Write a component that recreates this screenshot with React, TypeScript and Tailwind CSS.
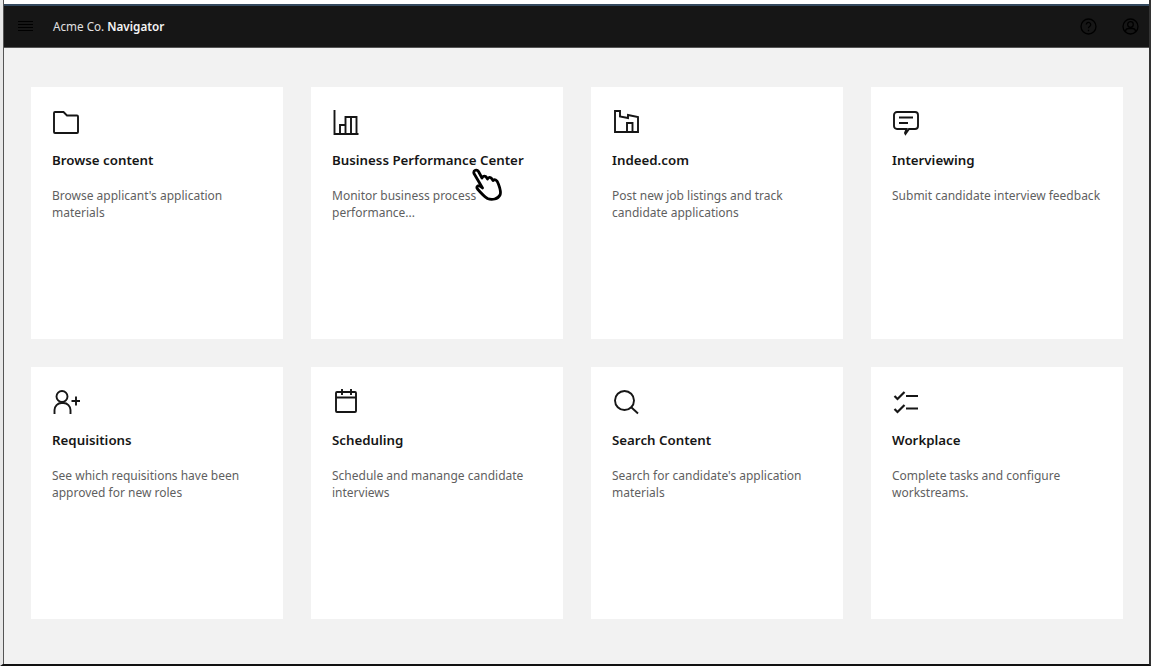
import type { ReactNode } from 'react';

const font = "[font-family:'Noto_Sans',sans-serif]";

const svgProps = {
  width: 28,
  height: 28,
  viewBox: '0 0 28 28',
  fill: 'none',
  stroke: '#161616',
  strokeWidth: 1.9,
};

const icons: Record<string, ReactNode> = {
  folder: (
    <svg {...svgProps}>
      <path d="M2 4a1 1 0 0 1 1-1h8.500l3.500 3.500h10a1 1 0 0 1 1 1V23a1 1 0 0 1-1 1H3a1 1 0 0 1-1-1z" />
    </svg>
  ),
  chart: (
    <svg {...svgProps}>
      <path d="M2.500 1v24h24" />
      <path d="M8 25v-9h5.500v9M13.500 16V8h5.500v17M19 8h5.500v17" />
    </svg>
  ),
  factory: (
    <svg {...svgProps}>
      <path d="M3 23V2h5v5.500l8 1.500V6l10 2v15z" />
      <path d="M15 23v-9h5.500v9" />
    </svg>
  ),
  chat: (
    <svg {...svgProps}>
      <path d="M5 3h18a3 3 0 0 1 3 3v11a3 3 0 0 1-3 3h-6l-3.500 5-.5-1 1.500-4H5a3 3 0 0 1-3-3V6a3 3 0 0 1 3-3z" />
      <path d="M7 8.500h14M7 14h9" />
    </svg>
  ),
  userPlus: (
    <svg {...svgProps}>
      <circle cx="10" cy="7.500" r="5.500" />
      <path d="M2.500 25v-4a7 7 0 0 1 7-7h2a7 7 0 0 1 7 7v4" />
      <path d="M24 7.500v9M19.500 12h9" />
    </svg>
  ),
  calendar: (
    <svg {...svgProps}>
      <rect x="4" y="3" width="20" height="20" rx="1" />
      <path d="M4 8.500h20M10 0v6M19 0v6" />
    </svg>
  ),
  search: (
    <svg {...svgProps}>
      <circle cx="12.500" cy="11.500" r="9.500" />
      <path d="M19.500 18.500l6.500 6" />
    </svg>
  ),
  checklist: (
    <svg {...svgProps}>
      <path d="M2.500 7l3 3 7-7M2.500 20l3 3 7-7" strokeWidth={2.200} />
      <path d="M14 7h12M14 19.500h12" strokeWidth={2.200} />
    </svg>
  ),
};

const cards = [
  { icon: 'folder', title: 'Browse content', text: "Browse applicant's application materials" },
  { icon: 'chart', title: 'Business Performance Center', text: 'Monitor business process performance...' },
  { icon: 'factory', title: 'Indeed.com', text: 'Post new job listings and track candidate applications' },
  { icon: 'chat', title: 'Interviewing', text: 'Submit candidate interview feedback' },
  { icon: 'userPlus', title: 'Requisitions', text: 'See which requisitions have been approved for new roles' },
  { icon: 'calendar', title: 'Scheduling', text: 'Schedule and manange candidate interviews' },
  { icon: 'search', title: 'Search Content', text: "Search for candidate's application materials" },
  { icon: 'checklist', title: 'Workplace', text: 'Complete tasks and configure workstreams.' },
];

function Card({ icon, title, text }: { icon: string; title: string; text: string }) {
  return (
    <div className="h-[252px] bg-white px-[21px] pt-[22px]">
      <div className="h-[28px] w-[28px]">{icons[icon]}</div>
      <h3 className="mt-[14px] text-[13.300px] leading-[18px] font-semibold text-[#161616]">{title}</h3>
      <p className="mt-[18px] w-[218px] text-[12px] leading-[17px] text-[#5f5f5f]">{text}</p>
    </div>
  );
}

function HandCursor() {
  return (
    <svg className="absolute top-[168px] left-[468px]" width="32" height="33" viewBox="0 0 32 33">
      <path
        d="M3 5.500 C2 2 6 1 7.500 3.500 L11 10 C12 7.500 14.500 7.500 15.500 9.500 L16.500 11 C17.500 8.500 20 9 21 11 L22 12.500 C23.500 11 26 12 27 15 C29 20 30.500 24 29 27 C27 31 21 32.500 16.500 30.500 C13 28.500 9.500 24.500 6.500 21 C5 19 7 16.500 9.500 18.500 L11.500 20 Z"
        fill="#fff"
        stroke="#000"
        strokeWidth="2.800"
        strokeLinejoin="round"
      />
    </svg>
  );
}

export default function App() {
  return (
    <div className={`relative flex h-[666px] w-[1151px] flex-col overflow-hidden border-r-2 border-b-2 border-l-[3px] border-r-[#333] border-b-[#111] border-l-[#e8e8e8] bg-[#f2f2f2] ${font}`}>
      <div className="flex h-full flex-col border-l border-[#555]">
        <div className="h-[4px] bg-white" />
        <div className="h-[2px] bg-[#34495e]" />
        <header className="flex h-[42px] items-center border-b border-[#555] bg-[#161616] pr-[10px] pl-[14px]">
          <svg width="15" height="12" viewBox="0 0 15 12" stroke="#000" strokeWidth="1">
            <path d="M0 .5h15M0 3.500h15M0 6.500h15M0 9.500h15" />
          </svg>
          <span className="ml-[20px] text-[11.700px] text-[#e0e0e0]">
            Acme Co. <span className="font-semibold text-[#f4f4f4]">Navigator</span>
          </span>
          <div className="ml-auto flex items-center gap-[25px]">
            <svg width="17" height="17" viewBox="0 0 17 17" fill="none" stroke="#000" strokeWidth="1.300">
              <circle cx="8.500" cy="8.500" r="7.500" />
              <path d="M6.300 6.500a2.200 2.200 0 1 1 3.300 2c-.8.500-1.100.9-1.100 1.800M8.500 11.800v1.500" />
            </svg>
            <svg width="17" height="17" viewBox="0 0 17 17" fill="none" stroke="#000" strokeWidth="1.300">
              <circle cx="8.500" cy="8.500" r="7.500" />
              <circle cx="8.500" cy="6.500" r="2.800" />
              <path d="M3.500 14v-1a3 3 0 0 1 3-2.500h4a3 3 0 0 1 3 2.500v1" />
            </svg>
          </div>
        </header>
        <main className="grid flex-1 grid-cols-4 content-start gap-[28px] pt-[39px] pr-[26px] pl-[27px]">
          {cards.map((card) => (
            <Card key={card.title} {...card} />
          ))}
        </main>
      </div>
      <HandCursor />
    </div>
  );
}
